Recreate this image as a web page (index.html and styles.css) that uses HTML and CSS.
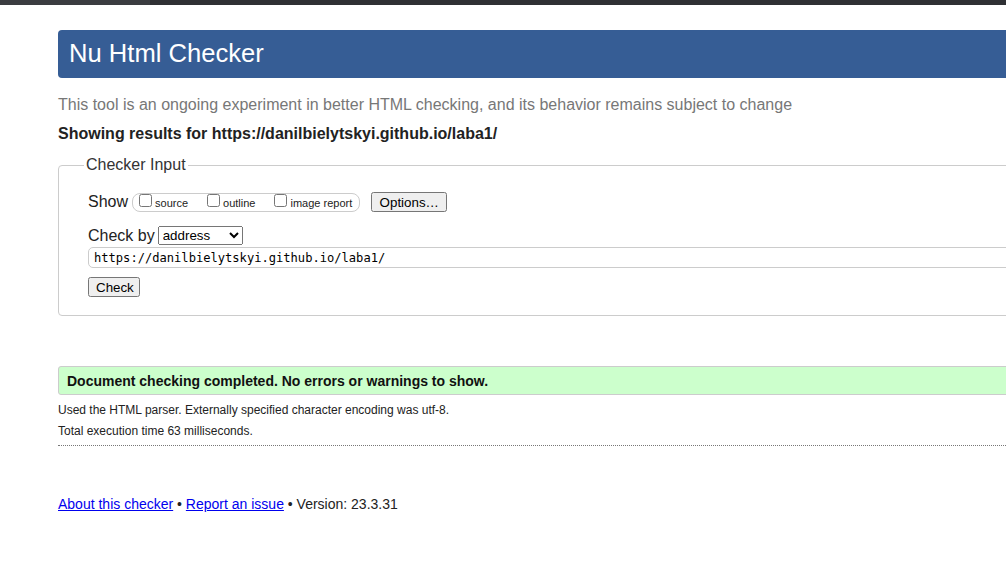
FILE: index.html
```html
<!DOCTYPE html>
<html lang="en">
<head>
<meta charset="utf-8">
<title>Nu Html Checker</title>
<link rel="stylesheet" href="styles.css">
</head>
<body>
<div class="topbar"><div class="topbar-left"></div></div>
<div class="page">
  <h1 class="title">Nu Html Checker</h1>
  <p class="subtitle">This tool is an ongoing experiment in better HTML checking, and its behavior remains subject to change</p>
  <p class="results-for">Showing results for https://danilbielytskyi.github.io/laba1/</p>
  <fieldset class="checker">
    <legend class="legend">Checker Input</legend>
    <div class="row show-row">
      <span class="row-label">Show</span>
      <div class="showbox">
        <label class="opt"><input type="checkbox" class="cb"><span class="opt-text">source</span></label>
        <label class="opt"><input type="checkbox" class="cb"><span class="opt-text">outline</span></label>
        <label class="opt"><input type="checkbox" class="cb"><span class="opt-text">image report</span></label>
      </div>
      <button class="btn btn-options" type="button">Options…</button>
    </div>
    <div class="row checkby-row">
      <span class="row-label">Check by</span>
      <select class="sel"><option>address</option></select>
    </div>
    <input class="url" type="text" value="https://danilbielytskyi.github.io/laba1/">
    <div class="submit-row"><button class="btn btn-check" type="button">Check</button></div>
  </fieldset>
  <div class="success">Document checking completed. No errors or warnings to show.</div>
  <div class="details">
    <p class="detail">Used the HTML parser. Externally specified character encoding was utf-8.</p>
    <p class="detail">Total execution time 63 milliseconds.</p>
  </div>
  <p class="footer"><a href="#">About this checker</a> • <a href="#">Report an issue</a> • Version: 23.3.31</p>
</div>
</body>
</html>
```
FILE: styles.css
```css
html {
  overflow: hidden;
  background: #fff;
}
body {
  margin: 0;
  font-family: Arial, "Liberation Sans", sans-serif;
  color: #222;
}
.topbar {
  height: 5px;
  background: #2f3034;
  display: flex;
}
.topbar-left {
  width: 150px;
  height: 5px;
  background: #3b3c40;
}
.page {
  margin-left: 58px;
  width: 1200px;
}
.title {
  margin: 25px 0 0;
  height: 48px;
  line-height: 47px;
  padding-left: 11px;
  background: #365d95;
  color: #fff;
  font-weight: normal;
  font-size: 25.6px;
  border-radius: 4px 0 0 4px;
}
.subtitle {
  margin: 18px 0 0;
  font-size: 16px;
  line-height: 18px;
  color: #777;
}
.results-for {
  margin: 11px 0 0;
  font-size: 16px;
  line-height: 18px;
  font-weight: bold;
  color: #222;
}
.checker {
  margin: 13px 0 0;
  padding: 18px 0 18px 29px;
  border: 1px solid #ccc;
  border-radius: 4px 0 0 4px;
  min-width: 0;
}
.legend {
  margin-left: -4px;
  padding: 0 2px;
  font-size: 16px;
  line-height: 18px;
  color: #333;
}
.row {
  display: flex;
  align-items: center;
}
.row-label {
  font-size: 16px;
  line-height: 18px;
  color: #222;
}
.show-row {
  height: 20px;
}
.showbox {
  display: flex;
  align-items: flex-end;
  margin-left: 4px;
  height: 19px;
  box-sizing: border-box;
  padding: 1px 7px 2px 6px;
  border: 1px solid #ccc;
  border-radius: 8px;
}
.opt {
  display: flex;
  align-items: flex-end;
  height: 15px;
  margin-right: 19px;
}
.opt:last-child {
  margin-right: 0;
}
.cb {
  width: 13px;
  height: 13px;
  margin: 0 3px 2px 0;
  align-self: flex-start;
}
.opt-text {
  font-size: 11px;
  line-height: 11px;
  color: #222;
}
.btn {
  font-family: Arial, "Liberation Sans", sans-serif;
  font-size: 13.33px;
  color: #000;
}
.btn-options {
  margin-left: 11px;
  width: 76px;
  height: 20px;
  padding: 0 6px;
}
.checkby-row {
  margin-top: 14px;
  height: 19px;
}
.sel {
  margin-left: 3px;
  width: 85px;
  height: 19px;
  font-family: Arial, "Liberation Sans", sans-serif;
  font-size: 13.33px;
  color: #000;
}
.url {
  display: block;
  margin-top: 2px;
  width: 1100px;
  height: 21px;
  box-sizing: border-box;
  padding: 0 5px;
  border: 1px solid #ccc;
  border-radius: 5px;
  font-family: "DejaVu Sans Mono", monospace;
  font-size: 12.1px;
  color: #000;
}
.submit-row {
  margin-top: 9px;
  display: flex;
}
.btn-check {
  width: 52px;
  height: 20px;
  padding: 0 6px;
}
.success {
  margin-top: 50px;
  padding: 6px 8px 5px;
  line-height: 16px;
  font-size: 14px;
  font-weight: bold;
  color: #111;
  background: #ccffcc;
  border: 1px solid #ccc;
  border-radius: 3px 0 0 3px;
}
.details {
  margin-top: 5px;
  padding-bottom: 3px;
  border-bottom: 1px dotted #777;
}
.detail {
  margin: 0;
  font-size: 12px;
  line-height: 21px;
  color: #222;
}
.footer {
  margin: 50px 0 0;
  font-size: 14px;
  line-height: 16px;
  color: #222;
}
.footer a {
  color: #0000ee;
}
```
